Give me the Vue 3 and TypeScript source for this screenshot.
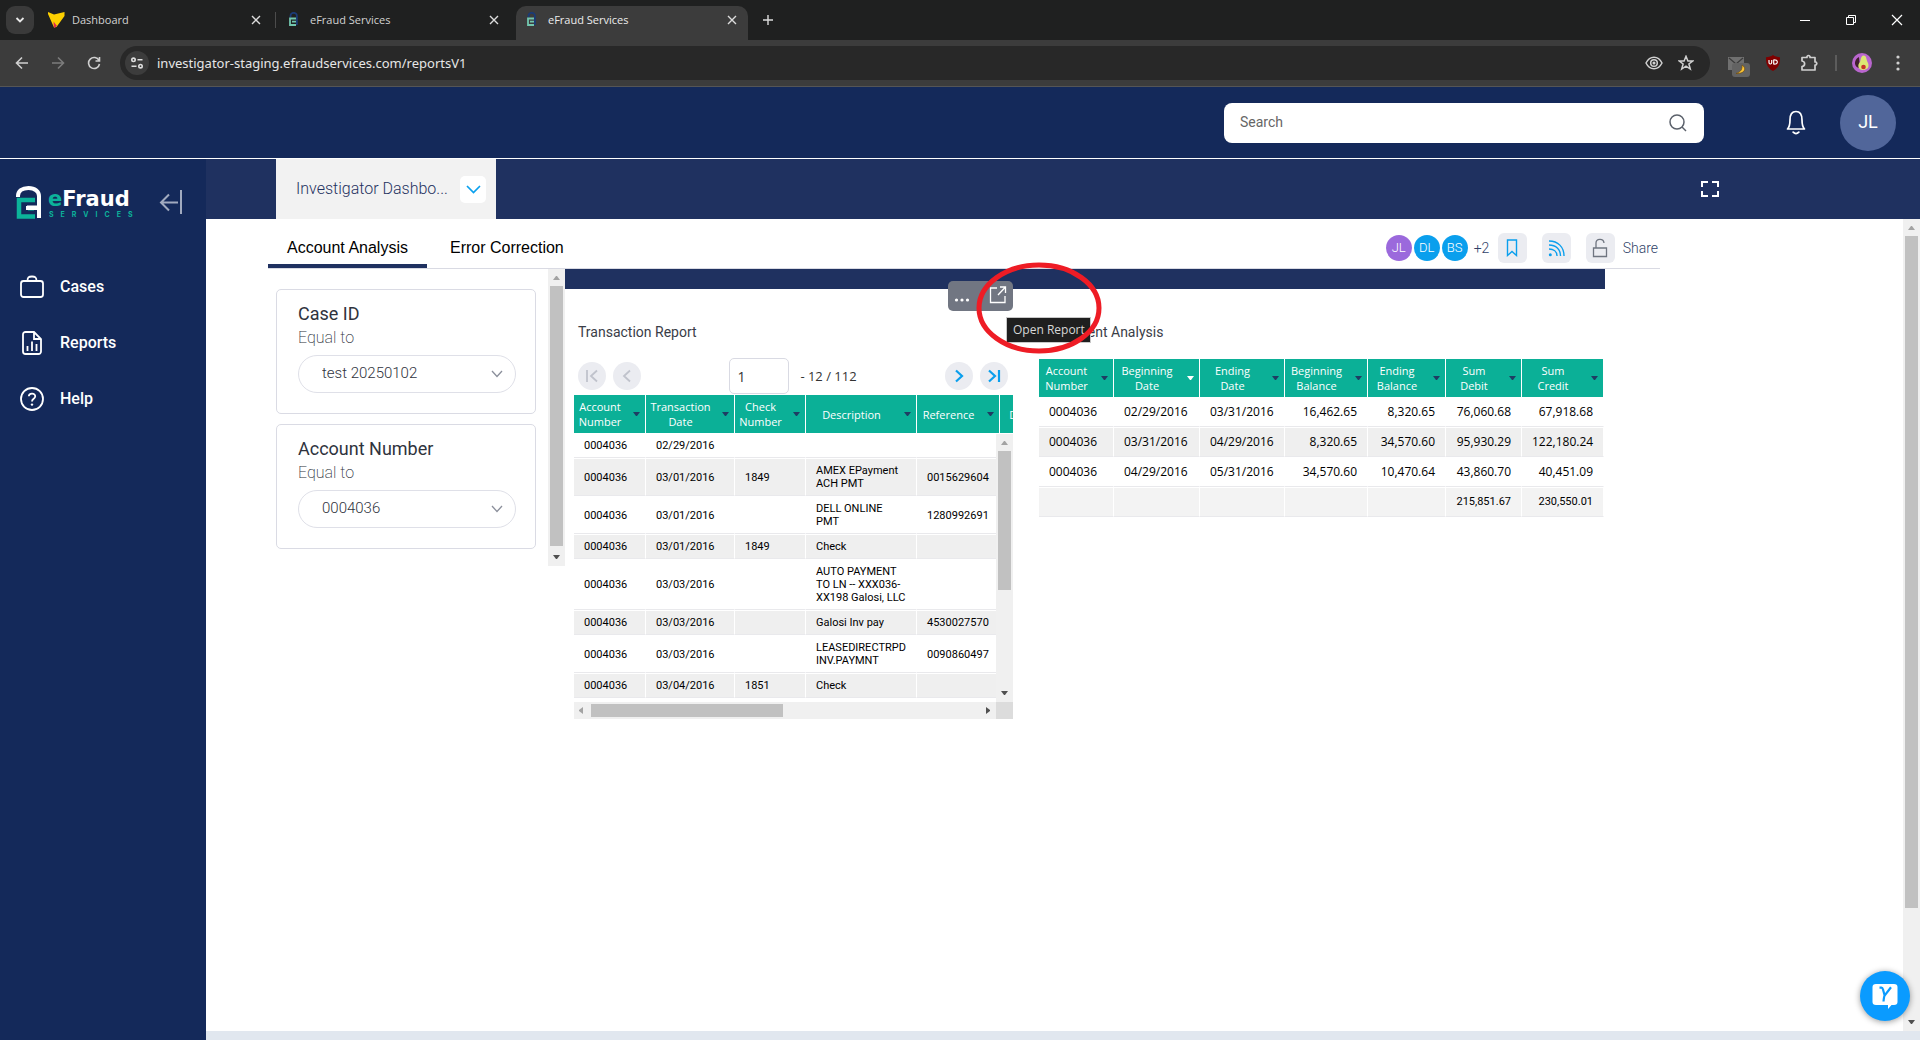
<script setup lang="ts">
import { ref } from 'vue'

interface BrowserTab {
  title: string
  icon: 'vivid' | 'lock'
  active: boolean
}

interface Filter {
  id: string
  label: string
  operator: string
  value: string
}

interface Column {
  lines: string[]
  width: number
  sorted?: boolean
}

const browserTabs: BrowserTab[] = [
  { title: 'Dashboard', icon: 'vivid', active: false },
  { title: 'eFraud Services', icon: 'lock', active: false },
  { title: 'eFraud Services', icon: 'lock', active: true },
]

const filters: Filter[] = [
  { id: 'case-id', label: 'Case ID', operator: 'Equal to', value: 'test 20250102' },
  { id: 'account-number', label: 'Account Number', operator: 'Equal to', value: '0004036' },
]

const transactionColumns: Column[] = [
  { lines: ['Account', 'Number'], width: 72 },
  { lines: ['Transaction', 'Date'], width: 89 },
  { lines: ['Check', 'Number'], width: 71 },
  { lines: ['Description'], width: 111 },
  { lines: ['Reference'], width: 83 },
  { lines: ['Debit'], width: 66 },
]

const transactions: string[][] = [
  ['0004036', '02/29/2016', '', '', '', ''],
  ['0004036', '03/01/2016', '1849', 'AMEX EPayment ACH PMT', '0015629604', ''],
  ['0004036', '03/01/2016', '', 'DELL ONLINE PMT', '1280992691', ''],
  ['0004036', '03/01/2016', '1849', 'Check', '', ''],
  ['0004036', '03/03/2016', '', 'AUTO PAYMENT TO LN -- XXX036-XX198 Galosi, LLC', '', ''],
  ['0004036', '03/03/2016', '', 'Galosi Inv pay', '4530027570', ''],
  ['0004036', '03/03/2016', '', 'LEASEDIRECTRPD INV.PAYMNT', '0090860497', ''],
  ['0004036', '03/04/2016', '1851', 'Check', '', ''],
]

const statementColumns: Column[] = [
  { lines: ['Account', 'Number'], width: 75 },
  { lines: ['Beginning', 'Date'], width: 86, sorted: true },
  { lines: ['Ending', 'Date'], width: 85 },
  { lines: ['Beginning', 'Balance'], width: 83 },
  { lines: ['Ending', 'Balance'], width: 78 },
  { lines: ['Sum', 'Debit'], width: 76 },
  { lines: ['Sum', 'Credit'], width: 82 },
]

const statements: string[][] = [
  ['0004036', '02/29/2016', '03/31/2016', '16,462.65', '8,320.65', '76,060.68', '67,918.68'],
  ['0004036', '03/31/2016', '04/29/2016', '8,320.65', '34,570.60', '95,930.29', '122,180.24'],
  ['0004036', '04/29/2016', '05/31/2016', '34,570.60', '10,470.64', '43,860.70', '40,451.09'],
]
const statementTotals: string[] = ['', '', '', '', '', '215,851.67', '230,550.01']

const address = ref('investigator-staging.efraudservices.com/reportsV1')
const page = ref('1')
const search = ref('')
</script>

<template>
  <div class="window">
    <div class="tab-strip">
      <button class="tab-menu" aria-label="Search tabs">
        <svg width="10" height="8" viewBox="0 0 10 8"><path d="M1.5 2 5 5.5 8.5 2" fill="none" stroke="#e8e8e8" stroke-width="1.8" /></svg>
      </button>
      <div v-for="(tab, i) in browserTabs" :key="i" class="browser-tab" :class="{ active: tab.active }">
        <svg v-if="tab.icon === 'vivid'" width="17" height="16" viewBox="0 0 17 16">
          <path d="M0 0 6 2.5 16.500 0 16.500 4 8.500 15 6 15.500 0 2z" fill="#fdd000" />
          <path d="M5.500 9.500 9 14 6 16z" fill="#e02b4c" />
        </svg>
        <svg v-else width="17" height="16" viewBox="0 0 17 16">
          <path d="M4.500 5.500V4a3.200 3.200 0 0 1 6.400 0V13" fill="none" stroke="#1b3a75" stroke-width="1.800" />
          <path d="M10 6.500H4V13H10M10 9.700H6" fill="none" stroke="#72c6ae" stroke-width="1.800" />
        </svg>
        <span class="tab-title">{{ tab.title }}</span>
        <button class="tab-close" aria-label="Close tab">
          <svg width="10" height="10" viewBox="0 0 10 10"><path d="M1 1 9 9M9 1 1 9" stroke="#dcdcdc" stroke-width="1.4" /></svg>
        </button>
      </div>
      <button class="new-tab" aria-label="New tab">
        <svg width="12" height="12" viewBox="0 0 12 12"><path d="M6 1V11M1 6H11" stroke="#dcdcdc" stroke-width="1.4" /></svg>
      </button>
      <div class="window-controls">
        <button aria-label="Minimize"><svg width="12" height="12" viewBox="0 0 12 12"><path d="M1 6.500H11" stroke="#fff" /></svg></button>
        <button aria-label="Restore"><svg width="12" height="12" viewBox="0 0 12 12"><path d="M1.500 3.500H8.500V10.500H1.500zM3.500 3.500V1.500H10.500V8.500H8.500" fill="none" stroke="#fff" /></svg></button>
        <button aria-label="Close"><svg width="12" height="12" viewBox="0 0 12 12"><path d="M1 1 11 11M11 1 1 11" stroke="#fff" stroke-width="1.200" /></svg></button>
      </div>
    </div>

    <div class="toolbar">
      <button class="nav-button" aria-label="Back">
        <svg width="14" height="14" viewBox="0 0 14 14"><path d="M13 7H2M7 1.500 1.500 7 7 12.500" fill="none" stroke="#d0d0d0" stroke-width="1.600" /></svg>
      </button>
      <button class="nav-button" aria-label="Forward">
        <svg width="14" height="14" viewBox="0 0 14 14"><path d="M1 7H12M7 1.500 12.500 7 7 12.500" fill="none" stroke="#7c7c7c" stroke-width="1.600" /></svg>
      </button>
      <button class="nav-button" aria-label="Reload">
        <svg width="14" height="14" viewBox="0 0 14 14"><path d="M12 4.500A5.500 5.500 0 1 0 12.500 8M12.500 1V5H8.500" fill="none" stroke="#d0d0d0" stroke-width="1.600" /></svg>
      </button>
      <div class="address-bar">
        <button class="site-info" aria-label="Site information">
          <svg width="14" height="12" viewBox="0 0 14 12">
            <g fill="none" stroke="#dedede" stroke-width="1.600"><circle cx="3.500" cy="2.800" r="1.700" /><path d="M7.500 2.800H12.500M1.500 9.200H6.500" /><circle cx="10.500" cy="9.200" r="1.700" /></g>
          </svg>
        </button>
        <input v-model="address" class="address" aria-label="Address" />
        <button class="bar-action" aria-label="View page">
          <svg width="18" height="14" viewBox="0 0 18 14"><g fill="none" stroke="#d0d0d0" stroke-width="1.500"><path d="M1 7C3 3 6 1.200 9 1.200S15 3 17 7C15 11 12 12.800 9 12.800S3 11 1 7z" /><circle cx="9" cy="7" r="3.300" /><circle cx="9" cy="7" r="0.800" /></g></svg>
        </button>
        <button class="bar-action" aria-label="Bookmark">
          <svg width="16" height="16" viewBox="0 0 16 16"><path d="M8 1.300 9.900 6H14.800L10.900 9 12.300 14 8 11.100 3.700 14 5.100 9 1.200 6H6.100z" fill="none" stroke="#d0d0d0" stroke-width="1.500" /></svg>
        </button>
      </div>
      <div class="extensions">
        <button class="extension mail" aria-label="Mail night mode">
          <svg width="22" height="22" viewBox="0 0 22 22">
            <path d="M0 1H16V14H0z" fill="#707070" /><path d="M1 2 8 8 15 2" fill="none" stroke="#3c3c3c" stroke-width="1.300" />
            <rect x="4" y="7" width="18" height="14" rx="3" fill="#636363" />
            <path d="M14 9C19 12 17 18 8 17.500 13 16 14.500 13 14 9z" fill="#fcc535" stroke="#704d12" stroke-width="0.700" />
          </svg>
        </button>
        <button class="extension" aria-label="Content blocker">
          <svg width="16" height="16" viewBox="0 0 16 16"><path d="M8 0C10 1.400 12 2 15 2.200 15.200 9 13.500 13 8 16 2.500 13 .8 9 1 2.200 4 2 6 1.400 8 0z" fill="#800000" /><path d="M4 5V7.500Q4 9 5.300 9T6.700 7.500V5M8.700 5V9Q12.300 9.300 12.300 7T8.700 5z" fill="none" stroke="#fff" stroke-width="1.200" /></svg>
        </button>
        <button class="extension" aria-label="Extensions">
          <svg width="18" height="18" viewBox="0 0 18 18"><path d="M2 3.500H7V2.500Q8.500 .5 10 2.500V3.500H15V8H16Q17.500 9.500 16 11H15V16H2V12.500C5.500 12 5.500 7.500 2 7z" fill="none" stroke="#d0d0d0" stroke-width="1.700" stroke-linejoin="round" /></svg>
        </button>
        <span class="divider"></span>
        <button class="extension" aria-label="Profile">
          <svg width="20" height="20" viewBox="0 0 20 20"><circle cx="10" cy="10" r="10" fill="#b966ce" /><path d="M7 4C1 7 2 15 8 15z" fill="#40202c" /><path d="M11.500 2.500C15 2.500 14 7 16 10 18 15 14 17 11 17 6 17 5 12 8 9 9 7 8.500 3 11.500 2.500z" fill="#dce774" /><circle cx="11.500" cy="14" r="2.300" fill="#c8322b" /></svg>
        </button>
        <button class="extension" aria-label="Browser menu">
          <svg width="4" height="16" viewBox="0 0 4 16"><g fill="#d0d0d0"><circle cx="2" cy="2" r="1.600" /><circle cx="2" cy="8" r="1.600" /><circle cx="2" cy="14" r="1.600" /></g></svg>
        </button>
      </div>
    </div>

    <header class="app-header">
      <div class="search">
        <input v-model="search" placeholder="Search" aria-label="Search" />
        <button aria-label="Run search">
          <svg width="18" height="18" viewBox="0 0 18 18"><circle cx="8" cy="8" r="7" fill="none" stroke="#5b616b" stroke-width="1.500" /><path d="M13 13 17 17" stroke="#5b616b" stroke-width="1.500" /></svg>
        </button>
      </div>
      <button class="bell" aria-label="Notifications">
        <svg width="20" height="26" viewBox="0 0 20 26"><path d="M1.500 19C3 17.500 4 15 4 10 4 4 6 1.500 10 1.500S16 4 16 10C16 15 17 17.500 18.500 19z" fill="none" stroke="#fff" stroke-width="1.700" stroke-linejoin="round" /><path d="M7.200 22.200Q10 25 12.800 22.200" fill="none" stroke="#fff" stroke-width="1.800" stroke-linecap="round" /></svg>
      </button>
      <button class="avatar" aria-label="Account">JL</button>
    </header>

    <div class="app-body">
      <aside class="sidebar">
        <div class="brand-row">
          <div class="brand">
            <svg width="26" height="33" viewBox="0 0 26 33">
              <path d="M2 11V10C2 5 6 2 12.500 2S23 5.500 23 10V32M11 21.500H22" fill="none" stroke="#fff" stroke-width="4" />
              <path d="M19 14H3V30.500H19M18 22.200H12" fill="none" stroke="#0cb39a" stroke-width="4.500" />
              <path d="M10 22H23" stroke="#fff" stroke-width="4" />
            </svg>
            <div class="brand-name">
              <span class="brand-title"><span class="brand-e">e</span>Fraud</span>
              <span class="brand-sub">SERVICES</span>
            </div>
          </div>
          <button class="collapse" aria-label="Collapse menu">
            <svg width="24" height="24" viewBox="0 0 24 24"><path d="M19 12.500H2M10 4.500 2 12.500 10 20.500M22 0V24" fill="none" stroke="#a1aabf" stroke-width="2" /></svg>
          </button>
        </div>
        <nav>
          <a href="#cases">
            <svg width="24" height="24" viewBox="0 0 24 24"><g fill="none" stroke="#fff" stroke-width="1.800"><rect x="1" y="6" width="22" height="16" rx="2.500" /><path d="M7.500 6C7.500 2.500 8.500 1.500 12 1.500S16.500 2.500 16.500 6" /></g></svg>
            Cases
          </a>
          <a href="#reports">
            <svg width="24" height="24" viewBox="0 0 24 24"><g fill="none" stroke="#fff" stroke-width="1.800"><path d="M14 1H5.500A2.500 2.500 0 0 0 3 3.500V20.500A2.500 2.500 0 0 0 5.500 23H18.500A2.500 2.500 0 0 0 21 20.500V8zM14 1V8H21M7.500 15V20M12 10.500V20M16.500 13V20" /></g></svg>
            Reports
          </a>
          <a href="#help">
            <svg width="24" height="24" viewBox="0 0 24 24"><circle cx="12" cy="12" r="11" fill="none" stroke="#fff" stroke-width="1.800" /><path d="M8.800 9.300C9 5.500 15.500 5.800 15.200 9.500 15 12 12 11.500 12 14.500" fill="none" stroke="#fff" stroke-width="1.800" /><circle cx="12" cy="17.600" r="1.200" fill="#fff" /></svg>
            Help
          </a>
        </nav>
      </aside>

      <main>
        <div class="dashboard-bar">
          <div class="dashboard-tab">
            <span>Investigator Dashbo...</span>
            <button aria-label="Dashboard options">
              <svg width="15" height="9" viewBox="0 0 15 9"><path d="M1 1 7.500 7.500 14 1" fill="none" stroke="#0aa0ee" stroke-width="1.700" /></svg>
            </button>
          </div>
          <button class="fullscreen" aria-label="Full screen">
            <svg width="18" height="16" viewBox="0 0 18 16"><path d="M1 6V1H7M11 1H17V6M17 10V15H11M7 15H1V10" fill="none" stroke="#fff" stroke-width="2" /></svg>
          </button>
        </div>

        <div class="page">
          <div class="board">
            <div class="board-head">
              <div class="board-tabs">
                <button class="board-tab selected">Account Analysis</button>
                <button class="board-tab">Error Correction</button>
              </div>
              <div class="sharing">
                <span class="chip violet">JL</span>
                <span class="chip">DL</span>
                <span class="chip">BS</span>
                <span class="more">+2</span>
                <button class="tool" aria-label="Bookmark board">
                  <svg width="12" height="18" viewBox="0 0 12 18"><path d="M1.500 1H10.500V16.500L6 12.500 1.500 16.500z" fill="none" stroke="#0a9fed" stroke-width="1.400" /></svg>
                </button>
                <button class="tool" aria-label="Follow board">
                  <svg width="17" height="17" viewBox="0 0 17 17"><g fill="none" stroke="#0a9fed" stroke-width="1.400"><path d="M1 1C10 1 16 7 16 16M1 5C8 5 12.500 9.500 12.500 16M1 9C5.500 9 9 11.500 9 16" /></g><circle cx="2.300" cy="14.700" r="1.500" fill="#0a9fed" /></svg>
                </button>
                <button class="tool" aria-label="Permissions">
                  <svg width="16" height="20" viewBox="0 0 16 20"><path d="M1.500 10H14.500V18.500H1.500zM4 10V5C4 .5 11.500 0 12 5" fill="none" stroke="#6f7580" stroke-width="1.300" /></svg>
                </button>
                <a class="share" href="#share">Share</a>
              </div>
            </div>

            <div class="board-body">
              <section class="filters">
                <div v-for="filter in filters" :key="filter.id" class="filter">
                  <label :for="filter.id">{{ filter.label }}</label>
                  <span class="operator">{{ filter.operator }}</span>
                  <div class="picker">
                    <select :id="filter.id"><option>{{ filter.value }}</option></select>
                    <svg width="12" height="8" viewBox="0 0 12 8"><path d="M1 1 6 6.500 11 1" fill="none" stroke="#8b8f9b" stroke-width="1.300" /></svg>
                  </div>
                </div>
              </section>
              <div class="scrollbar filter-scroll">
                <i class="arrow up"></i><span class="thumb"></span><i class="arrow down"></i>
              </div>

              <section class="reports">
                <div class="banner"></div>
                <div class="report-row">
                  <article class="report transactions">
                    <h2>Transaction Report</h2>
                    <div class="report-tools">
                      <button aria-label="More options">
                        <svg width="16" height="4" viewBox="0 0 16 4"><g fill="#fff"><circle cx="2.500" cy="2" r="1.600" /><circle cx="8" cy="2" r="1.600" /><circle cx="13.500" cy="2" r="1.600" /></g></svg>
                      </button>
                      <button class="open" aria-label="Open Report">
                        <svg width="18" height="18" viewBox="0 0 18 18"><path d="M8 2H1.500V16.500H16V10M11 1H16.500V7M16.500 1 9 9" fill="none" stroke="#fff" stroke-width="1.300" /></svg>
                      </button>
                    </div>
                    <div class="pager">
                      <button aria-label="First page"><svg width="14" height="14" viewBox="0 0 14 14"><path d="M2 1V13M12 1.500 6 7 12 12.500" fill="none" stroke="#c0c3cc" stroke-width="1.800" /></svg></button>
                      <button aria-label="Previous page"><svg width="14" height="14" viewBox="0 0 14 14"><path d="M10 1.500 4 7 10 12.500" fill="none" stroke="#c0c3cc" stroke-width="1.800" /></svg></button>
                      <div class="page-number">
                        <input v-model="page" aria-label="Page" />
                        <span>- 12 / 112</span>
                      </div>
                      <button aria-label="Next page"><svg width="14" height="14" viewBox="0 0 14 14"><path d="M4 1.500 10 7 4 12.500" fill="none" stroke="#0a9fed" stroke-width="2.200" /></svg></button>
                      <button aria-label="Last page"><svg width="14" height="14" viewBox="0 0 14 14"><path d="M2 1.500 8 7 2 12.500M12 1V13" fill="none" stroke="#0a9fed" stroke-width="2.200" /></svg></button>
                    </div>
                    <div class="table-view">
                      <table class="transaction-table">
                        <colgroup><col v-for="(c, i) in transactionColumns" :key="i" :style="{ width: c.width + 'px' }" /></colgroup>
                        <thead>
                          <tr>
                            <th v-for="(c, i) in transactionColumns" :key="i">
                              <div class="th"><span><template v-for="(l, j) in c.lines" :key="j"><br v-if="j" />{{ l }}</template></span><i class="caret"></i></div>
                            </th>
                          </tr>
                        </thead>
                        <tbody>
                          <tr v-for="(row, r) in transactions" :key="r"><td v-for="(cell, c) in row" :key="c">{{ cell }}</td></tr>
                        </tbody>
                      </table>
                      <div class="scrollbar table-scroll">
                        <i class="arrow up"></i><span class="thumb"></span><i class="arrow down"></i>
                      </div>
                    </div>
                    <div class="scrollbar-row">
                      <div class="scrollbar horizontal">
                        <i class="arrow left"></i><span class="thumb"></span><i class="arrow right"></i>
                      </div>
                      <div class="corner"></div>
                    </div>
                    <div class="tooltip" role="tooltip">Open Report</div>
                    <svg class="marker" width="130" height="98" viewBox="0 0 130 98"><ellipse cx="65" cy="49" rx="60" ry="43" fill="none" stroke="#ee1c25" stroke-width="5" /></svg>
                  </article>

                  <article class="report statement">
                    <h2>Statement Analysis</h2>
                    <table class="statement-table">
                      <colgroup><col v-for="(c, i) in statementColumns" :key="i" :style="{ width: c.width + 'px' }" /></colgroup>
                      <thead>
                        <tr>
                          <th v-for="(c, i) in statementColumns" :key="i">
                            <div class="th"><span><template v-for="(l, j) in c.lines" :key="j"><br v-if="j" />{{ l }}</template></span><i class="caret" :class="{ sorted: c.sorted }"></i></div>
                          </th>
                        </tr>
                      </thead>
                      <tbody>
                        <tr v-for="(row, r) in statements" :key="r"><td v-for="(cell, c) in row" :key="c" :class="{ amount: c > 2 }">{{ cell }}</td></tr>
                      </tbody>
                      <tfoot>
                        <tr><td v-for="(cell, c) in statementTotals" :key="c" class="amount">{{ cell }}</td></tr>
                      </tfoot>
                    </table>
                  </article>
                </div>
              </section>
            </div>
          </div>
          <div class="scrollbar page-scroll">
            <i class="arrow up"></i><span class="thumb"></span><i class="arrow down"></i>
          </div>
        </div>
        <footer></footer>
      </main>
    </div>

    <button class="chat" aria-label="Open chat">
      <svg width="26" height="26" viewBox="0 0 26 26"><path d="M4 1H22Q25.500 1 25.500 4V19Q25.500 22 22 22H19.500L16 26V22H4Q.5 22 .5 19V4Q.5 1 4 1z" fill="#fff" /><path d="M7.500 4.700H9.500Q10.500 4.700 11 6.500L12.500 12M19 4.300 12.600 12.500Q12 13.500 11.500 18.500" fill="none" stroke="#0a9bff" stroke-width="2.200" /></svg>
    </button>
  </div>
</template>

<style>
body {
  margin: 0;
}
</style>

<style scoped>
* {
  box-sizing: border-box;
}
button {
  display: flex;
  align-items: center;
  justify-content: center;
  padding: 0;
  border: 0;
  background: none;
  font: inherit;
  color: inherit;
}
svg {
  display: block;
  flex: none;
}
.window {
  position: relative;
  display: flex;
  flex-direction: column;
  min-height: 100vh;
  font-family: Roboto, "Liberation Sans", sans-serif;
  background: #fff;
}

/* Browser frame */
.tab-strip {
  display: flex;
  align-items: center;
  height: 40px;
  padding-left: 6px;
  background: #1f2020;
  color: #d2d2d2;
  font: 11px/16px "Open Sans", sans-serif;
}
.tab-menu {
  width: 28px;
  height: 28px;
  margin-right: 6px;
  border-radius: 9px;
  background: #3a3a3a;
}
.browser-tab {
  display: flex;
  align-items: center;
  align-self: flex-end;
  gap: 7px;
  width: 232px;
  height: 34px;
  margin-right: 6px;
  padding: 0 8px 6px;
}
.browser-tab:nth-child(3) {
  position: relative;
}
.browser-tab:nth-child(3)::before {
  content: "";
  position: absolute;
  left: -3px;
  top: 6px;
  width: 1px;
  height: 16px;
  background: #4c4c4c;
}
.browser-tab.active {
  border-radius: 10px 10px 0 0;
  background: #3c3c3c;
  color: #ececec;
}
.tab-title {
  flex: 1;
}
.tab-close {
  width: 16px;
  height: 16px;
}
.new-tab {
  width: 28px;
  height: 28px;
}
.window-controls {
  display: flex;
  margin-left: auto;
}
.window-controls button {
  width: 46px;
  height: 40px;
}
.toolbar {
  display: flex;
  align-items: center;
  height: 47px;
  padding: 0 10px 0 4px;
  border-bottom: 1px solid #555;
  background: #3c3c3c;
}
.nav-button {
  width: 36px;
  height: 34px;
}
.address-bar {
  display: flex;
  flex: 1;
  align-items: center;
  height: 34px;
  margin: 0 9px 0 8px;
  padding: 0 8px 0 5px;
  border-radius: 17px;
  background: #282828;
}
.site-info {
  width: 24px;
  height: 24px;
  border-radius: 12px;
  background: #3c3c3c;
}
.address {
  flex: 1;
  padding: 0 8px;
  border: 0;
  outline: 0;
  background: none;
  color: #e6e6e6;
  font: 13px/20px "Noto Sans", sans-serif;
}
.bar-action {
  width: 32px;
  height: 32px;
}
.extensions {
  display: flex;
  align-items: center;
}
.extension {
  width: 36px;
  height: 36px;
}
.extension.mail {
  padding: 7px 0 0 3px;
}
.extension:last-child {
  width: 24px;
  margin-left: 6px;
}
.divider {
  width: 2px;
  height: 16px;
  margin: 0 7px 0 8px;
  background: #5c5c5c;
}

/* Application header */
.app-header {
  display: flex;
  align-items: center;
  justify-content: flex-end;
  height: 72px;
  padding: 0 24px 0 0;
  border-bottom: 1px solid #fff;
  background: #14295a;
}
.search {
  display: flex;
  align-items: center;
  width: 480px;
  height: 40px;
  padding: 0 17px 0 16px;
  border-radius: 8px;
  background: #fff;
}
.search input {
  flex: 1;
  padding: 0 0 2px;
  border: 0;
  outline: 0;
  background: none;
  color: #333;
  font: 14px/20px Roboto, sans-serif;
}
.search input::placeholder {
  color: #666;
}
.bell {
  width: 40px;
  height: 40px;
  margin: 0 24px 0 72px;
}
.avatar {
  width: 56px;
  height: 56px;
  padding-bottom: 2px;
  border-radius: 50%;
  background: #51669a;
  color: #fff;
  font-size: 18px;
}
.app-body {
  display: flex;
  flex: 1;
}

/* Side menu */
.sidebar {
  flex: none;
  width: 206px;
  background: #14295a;
}
.brand-row {
  display: flex;
  align-items: center;
  justify-content: space-between;
  padding: 26px 23px 0 16px;
}
.brand {
  display: flex;
  align-items: center;
  gap: 6px;
}
.brand-name {
  display: flex;
  flex-direction: column;
  padding-top: 2px;
  color: #fff;
}
.brand-title {
  font: 700 21px/24px "DejaVu Sans", sans-serif;
}
.brand-e,
.brand-sub {
  color: #0cb39a;
}
.brand-sub {
  padding-left: 1px;
  font: 700 7px/8px Inter, sans-serif;
  letter-spacing: 7px;
}
nav {
  display: flex;
  flex-direction: column;
  gap: 32px;
  padding: 56px 20px;
}
nav a {
  display: flex;
  align-items: center;
  gap: 16px;
  color: #fff;
  font: 500 16px/24px Roboto, sans-serif;
  text-decoration: none;
}

/* Dashboard */
main {
  display: flex;
  flex: 1;
  flex-direction: column;
  min-width: 0;
}
.dashboard-bar {
  display: flex;
  align-items: center;
  justify-content: space-between;
  height: 60px;
  padding: 0 201px 0 70px;
  background: #1f3160;
}
.dashboard-tab {
  display: flex;
  align-items: center;
  justify-content: space-between;
  width: 220px;
  height: 60px;
  padding: 0 10px 0 20px;
  background: #f2f2f2;
  color: #1f3160;
  font: 300 16px/20px Roboto, sans-serif;
}
.dashboard-tab button {
  width: 26px;
  height: 27px;
  border-radius: 5px;
  background: #fff;
}
.page {
  display: flex;
  flex: 1;
  justify-content: space-between;
}
.board {
  flex: 1;
  min-width: 0;
  margin: 0 243px 0 62px;
}
.board-head {
  display: flex;
  align-items: flex-end;
  justify-content: space-between;
  height: 50px;
  border-bottom: 1px solid #d9dae3;
}
.board-tabs {
  display: flex;
  gap: 4px;
}
.board-tab {
  height: 40px;
  padding: 4px 19px 0;
  border-bottom: 4px solid transparent;
  color: #000;
  font: 16px/20px "Liberation Sans", Arial, sans-serif;
}
.board-tab.selected {
  border-color: #1f3160;
}
.sharing {
  display: flex;
  align-items: center;
  height: 40px;
  color: #2f3f68;
  font: 300 14px/20px Roboto, sans-serif;
}
.chip {
  width: 26px;
  height: 26px;
  margin-right: 2px;
  border-radius: 50%;
  background: #0a9fed;
  color: #fff;
  font-size: 13px;
  line-height: 26px;
  text-align: center;
}
.chip.violet {
  background: #9b69dc;
}
.more {
  width: 24px;
  margin-left: 4px;
}
.tool {
  width: 29px;
  height: 30px;
  margin-right: 15px;
  border-radius: 6px;
  background: #ebecf1;
}
.share {
  margin-left: -7px;
  padding-right: 2px;
  color: #2f3f68;
  text-decoration: none;
}
.board-body {
  display: flex;
  align-items: flex-start;
}
.filters {
  display: flex;
  flex: none;
  flex-direction: column;
  gap: 10px;
  width: 280px;
  padding: 20px 12px 0 8px;
}
.filter {
  display: flex;
  flex-direction: column;
  height: 125px;
  padding: 13px 19px 0 21px;
  border: 1px solid #dadbe4;
  border-radius: 5px;
}
.filter label {
  color: #2f333d;
  font-size: 18px;
  line-height: 22px;
}
.operator {
  color: #2f333d;
  font-size: 16px;
  font-weight: 200;
  line-height: 26px;
}
.picker {
  display: flex;
  align-items: center;
  height: 38px;
  margin-top: 4px;
  padding-right: 12px;
  border: 1px solid #dfe0e8;
  border-radius: 19px;
}
.picker select {
  flex: 1;
  height: 36px;
  padding: 0 23px 2px;
  border: 0;
  outline: 0;
  background: none;
  color: #2f333d;
  font: 300 15px/20px Roboto, sans-serif;
  appearance: none;
}

/* Scrollbars */
.scrollbar {
  display: flex;
  flex: none;
  flex-direction: column;
  align-items: center;
  width: 17px;
  background: #f0f0f0;
}
.thumb {
  width: 13px;
  background: #c1c1c1;
}
.arrow {
  flex: none;
  width: 17px;
  height: 17px;
  background: #505050;
  clip-path: polygon(5px 6px, 12px 6px, 9px 10px, 8px 10px);
}
.arrow.down {
  margin-top: auto;
}
.arrow.up {
  background: #a3a3a3;
  clip-path: polygon(5px 11px, 12px 11px, 9px 7px, 8px 7px);
}
.arrow.left {
  background: #a3a3a3;
  clip-path: polygon(9px 5px, 9px 12px, 5px 9px, 5px 8px);
}
.arrow.right {
  margin-left: auto;
  clip-path: polygon(7px 5px, 7px 12px, 11px 9px, 11px 8px);
}
.filter-scroll {
  height: 297px;
}
.filter-scroll .thumb {
  height: 260px;
}
.page-scroll .thumb {
  height: calc(83% - 2px);
}

/* Reports */
.reports {
  flex: 1;
  min-width: 0;
}
.banner {
  height: 20px;
  margin-right: 55px;
  background: #1f3160;
}
.report-row {
  display: flex;
  align-items: flex-start;
  gap: 26px;
  padding-left: 9px;
}
.report {
  position: relative;
  flex: none;
}
.report h2 {
  margin: 33px 0 0 4px;
  color: #3a3d47;
  font-size: 14px;
  font-weight: 400;
  line-height: 20px;
}
.transactions {
  width: 439px;
}
.report-tools {
  position: absolute;
  right: 0;
  top: -8px;
  display: flex;
  width: 65px;
  height: 30px;
  padding: 0 6px;
  justify-content: space-between;
  border-radius: 5px;
  background: #717682;
}
.report-tools button {
  padding-top: 7px;
}
.report-tools .open {
  padding: 0 0 3px;
}
.pager {
  display: flex;
  align-items: center;
  gap: 7px;
  height: 36px;
  margin: 16px 0 1px;
  padding: 0 5px 0 4px;
}
.pager button {
  width: 28px;
  height: 28px;
  border-radius: 50%;
  background: #ebecf1;
}
.page-number {
  display: flex;
  flex: 1;
  align-items: center;
  justify-content: center;
  gap: 11px;
  color: #333;
  font: 13px/20px "Open Sans", sans-serif;
}
.page-number input {
  width: 60px;
  height: 36px;
  padding: 0 7px;
  border: 1px solid #d9dae3;
  border-radius: 5px;
  outline: 0;
  color: #333;
  font-family: inherit;
  font-size: 14px;
}
table {
  border-spacing: 0;
  table-layout: fixed;
}
th {
  height: 38px;
  padding: 0;
  border-right: 1px solid #fff;
  background: #0bb097;
  color: #fff;
  font: 11px/15px "Open Sans", sans-serif;
}
.th {
  display: flex;
  align-items: center;
  gap: 10px;
  padding: 0 5px 0 3px;
  white-space: nowrap;
}
.th span {
  flex: 1;
}
.caret {
  flex: none;
  width: 7px;
  height: 4px;
  background: #1f3d63;
  clip-path: polygon(0 0, 7px 0, 4px 4px, 3px 4px);
}
.caret.sorted {
  background: #fff;
}
td {
  padding: 5px 8px 5px 10px;
  border: solid #fff;
  border-width: 1px 1px 1px 0;
  border-bottom-color: #e9e9ec;
  background: #fff;
  color: #000;
}
tbody tr:nth-child(even) td {
  background: #efefef;
}
.table-view {
  position: relative;
  height: 307px;
  overflow: hidden;
}
.transaction-table {
  width: 492px;
}
.transaction-table td {
  height: 25px;
  font-size: 11px;
  line-height: 13px;
}
.table-scroll {
  position: absolute;
  right: 0;
  top: 39px;
  bottom: 0;
}
.table-scroll .thumb {
  height: 139px;
}
.scrollbar-row {
  display: flex;
}
.scrollbar.horizontal {
  flex: 1;
  flex-direction: row;
  height: 17px;
}
.horizontal .thumb {
  width: 192px;
  height: 13px;
}
.corner {
  width: 17px;
  height: 17px;
  background: #dcdcdc;
}
.tooltip {
  position: absolute;
  left: 432px;
  top: 28px;
  padding: 4px 5px 4px 6px;
  border: 1px solid #c8c8c8;
  background: #1f1f1f;
  color: #d8d8d8;
  font: 12px/16px "Open Sans", sans-serif;
  white-space: nowrap;
  z-index: 2;
}
.marker {
  position: absolute;
  left: 400px;
  top: -30px;
  z-index: 3;
}
.statement-table {
  width: 565px;
  margin-top: 17px;
}
.statement-table td {
  height: 30px;
  padding: 0 10px;
  font: 12px/20px "Open Sans", sans-serif;
}
.statement-table td.amount {
  text-align: right;
}
.statement-table tfoot td {
  background: #f3f3f3;
  font: 11px/20px Roboto, sans-serif;
}
footer {
  height: 9px;
  background: #e1e7ef;
}
.chat {
  position: absolute;
  right: 10px;
  bottom: 19px;
  width: 50px;
  height: 50px;
  border-radius: 50%;
  background: #0a9bff;
  box-shadow: 0 1px 6px rgba(0, 0, 0, 0.4);
}
</style>
